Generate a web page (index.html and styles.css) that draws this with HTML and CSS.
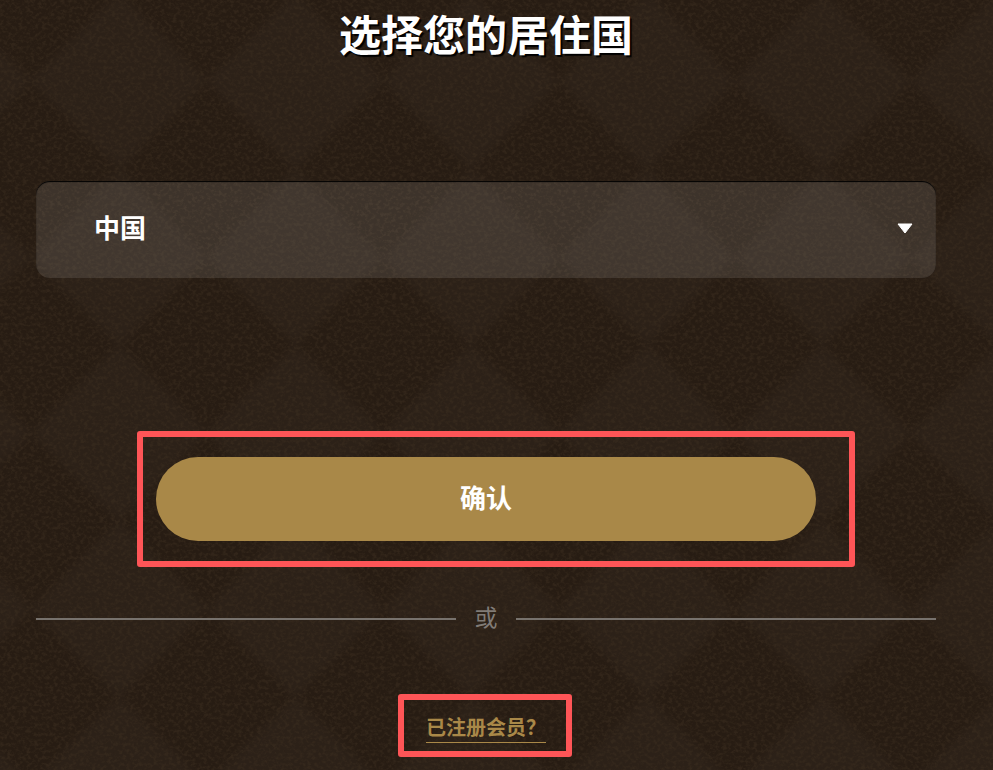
FILE: index.html
```html
<!DOCTYPE html>
<html lang="zh-CN">
<head>
<meta charset="utf-8">
<title>选择您的居住国</title>
<link rel="stylesheet" href="styles.css">
</head>
<body>
<svg class="texture" width="993" height="770" aria-hidden="true">
  <defs>
    <pattern id="check" width="176" height="176" patternUnits="userSpaceOnUse" x="31" y="-7">
      <rect width="176" height="176" fill="#2c2118"/>
      <polygon points="0,0 88,0 0,88" fill="#271c13"/>
      <polygon points="176,0 88,0 176,88" fill="#271c13"/>
      <polygon points="0,176 88,176 0,88" fill="#271c13"/>
      <polygon points="176,176 88,176 176,88" fill="#271c13"/>
    </pattern>
    <filter id="soft" x="0" y="0" width="100%" height="100%" color-interpolation-filters="sRGB">
      <feGaussianBlur stdDeviation="4"/>
    </filter>
    <filter id="leather" x="0" y="0" width="100%" height="100%" color-interpolation-filters="sRGB">
      <feTurbulence type="fractalNoise" baseFrequency="0.26 0.3" numOctaves="3" seed="7"/>
      <feColorMatrix type="matrix" values="0 0 0 0 0.235  0 0 0 0 0.18  0 0 0 0 0.125  3 0 0 0 -1.25"/>
    </filter>
  </defs>
  <rect x="-30" y="-30" width="1053" height="830" fill="url(#check)" filter="url(#soft)"/>
  <rect width="993" height="770" filter="url(#leather)" opacity="0.55"/>
</svg>
<main class="page">
  <h1 class="title">选择您的居住国</h1>
  <div class="select">
    <span class="select-value">中国</span>
    <svg class="caret" width="16" height="11" viewBox="0 0 16 11"><path d="M1 1H15L8 10Z" fill="#fff" stroke="#fff" stroke-width="1" stroke-linejoin="round"/></svg>
  </div>
  <div class="confirm-row">
    <button class="confirm" type="button">确认</button>
    <span class="mark mark-confirm"></span>
  </div>
  <div class="divider">
    <span class="line"></span>
    <span class="or">或</span>
    <span class="line"></span>
  </div>
  <div class="member-row">
    <a class="member" href="#">已注册会员？<span class="mark mark-member"></span></a>
  </div>
</main>
</body>
</html>
```
FILE: styles.css
```css
html, body {
  margin: 0;
  padding: 0;
  height: 770px;
  overflow: hidden;
  background: #2a1f16;
}
body {
  position: relative;
  font-family: "Noto Sans CJK SC", "Noto Sans", sans-serif;
  color: #fff;
}
.texture {
  position: absolute;
  left: 0;
  top: 0;
}
.page {
  position: relative;
  width: 900px;
  margin-left: 36px;
  display: flex;
  flex-direction: column;
}
.title {
  margin: 4px 0 0;
  height: 177px;
  font-size: 42px;
  line-height: 58px;
  font-weight: 700;
  text-align: center;
  text-shadow: 2px 2px 1px #000;
}
.select {
  box-sizing: border-box;
  height: 97px;
  padding: 0 23px 0 58px;
  display: flex;
  align-items: center;
  justify-content: space-between;
  border-radius: 14px;
  background: rgba(255, 255, 255, 0.1);
  box-shadow: inset 0 1px 1px #000;
  font-size: 26px;
  font-weight: 700;
}
.select-value {
  margin-bottom: 6px;
}
.caret {
  display: block;
  margin-bottom: 3px;
}
.confirm-row {
  position: relative;
  width: 660px;
  margin: 179px auto 0;
}
.confirm {
  display: block;
  width: 100%;
  height: 84px;
  padding: 0 0 5px;
  border: 0;
  border-radius: 42px;
  background: #a98848;
  color: #fff;
  font-family: inherit;
  font-size: 26px;
  font-weight: 700;
}
.mark {
  position: absolute;
  box-sizing: border-box;
  border: 6px solid #fe5557;
  border-radius: 3px;
}
.mark-confirm {
  left: -19px;
  top: -26px;
  width: 718px;
  height: 136px;
}
.divider {
  margin-top: 62px;
  height: 32px;
  display: flex;
  align-items: center;
}
.line {
  flex: 1;
  height: 2px;
  background: #77726d;
}
.or {
  width: 60px;
  padding-bottom: 5px;
  text-align: center;
  font-size: 23px;
  line-height: 27px;
  color: #807b76;
}
.member-row {
  margin-top: 78px;
  display: flex;
  justify-content: center;
}
.member {
  position: relative;
  display: block;
  box-sizing: border-box;
  width: 120px;
  height: 30px;
  border-bottom: 1px solid #a98848;
  color: #a98848;
  font-size: 20px;
  line-height: 28px;
  font-weight: 700;
  text-decoration: none;
  white-space: nowrap;
}
.mark-member {
  left: -28px;
  top: -19px;
  width: 174px;
  height: 63px;
}
```
